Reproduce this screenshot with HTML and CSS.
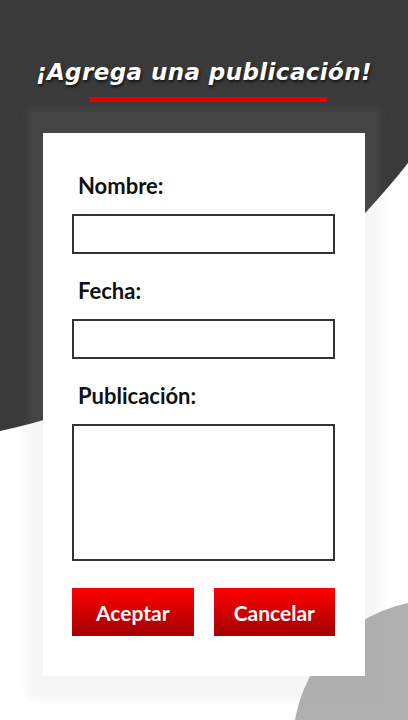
FILE: index.html
```html
<!DOCTYPE html>
<html lang="es">
<head>
  <meta charset="UTF-8">
  <title>Agrega una publicación</title>
  <link rel="stylesheet" href="styles.css">
</head>
<body>
  <!-- background shapes -->
  <svg class="bg-shapes" width="408" height="720" viewBox="0 0 408 720">
    <path d="M0,0 H408 V163 C300,300 150,400 0,431 Z" fill="#3a3a3a"/>
    <circle cx="437" cy="744" r="144" fill="#b0b0b0"/>
  </svg>

  <div class="page">
    <h1 class="title">¡Agrega una publicación!</h1>
    <div class="title-line"></div>

    <div class="card-frame">
      <form class="card" id="postForm">
        <label for="nombre">Nombre:</label>
        <input type="text" id="nombre" name="nombre">

        <label for="fecha">Fecha:</label>
        <input type="text" id="fecha" name="fecha">

        <label for="publicacion">Publicación:</label>
        <textarea id="publicacion" name="publicacion"></textarea>

        <div class="buttons">
          <button type="submit">Aceptar</button>
          <button type="button">Cancelar</button>
        </div>
      </form>
    </div>
  </div>
</body>
</html>
```

FILE: styles.css
```css
body {
  margin: 0;
  width: 408px;
  height: 720px;
  overflow: hidden;
  background-color: #fff;
  font-family: Lato, "Open Sans", sans-serif;
  position: relative;
}

.bg-shapes {
  position: absolute;
  left: 0;
  top: 0;
  z-index: 0;
}

.page {
  position: relative;
  z-index: 1;
  display: flex;
  flex-direction: column;
}

.title {
  margin: 0;
  padding-top: 56px;
  font-family: "DejaVu Sans", sans-serif;
  font-size: 23px;
  line-height: 32px;
  font-weight: 700;
  font-style: italic;
  letter-spacing: 0.4px;
  color: #fff;
  text-align: center;
  text-shadow: 1px 2px 3px rgba(0, 0, 0, 0.7);
}

.title-line {
  width: 238px;
  height: 5px;
  margin: 9px 0 0 89px;
  background-color: #e80000;
}

.card-frame {
  margin: 10px 0 0 32px;
  width: 322px;
  padding: 21px 11px 19px;
  background-color: rgba(170, 170, 170, 0.1);
  box-shadow: 0 0 10px 4px rgba(170, 170, 170, 0.1);
}

.card {
  height: 543px;
  box-sizing: border-box;
  background-color: #fff;
  padding: 40px 30px 0 29px;
  display: flex;
  flex-direction: column;
}

label {
  font-size: 22px;
  line-height: 26px;
  font-weight: 700;
  color: #111;
  padding-left: 6px;
  margin-bottom: 15px;
}

input,
textarea {
  box-sizing: border-box;
  width: 263px;
  height: 40px;
  border: 2px solid #333;
  border-radius: 0;
  margin: 0 0 24px;
  padding: 4px 8px;
  font-family: inherit;
  font-size: 16px;
  resize: none;
}

textarea {
  height: 137px;
  margin-bottom: 27px;
}

.buttons {
  display: flex;
  gap: 20px;
}

button {
  width: 122px;
  height: 48px;
  border: none;
  border-radius: 0;
  background: linear-gradient(#ff0000, #a30000);
  color: #fff;
  font-family: inherit;
  font-size: 21px;
  font-weight: 700;
  cursor: pointer;
}
```
